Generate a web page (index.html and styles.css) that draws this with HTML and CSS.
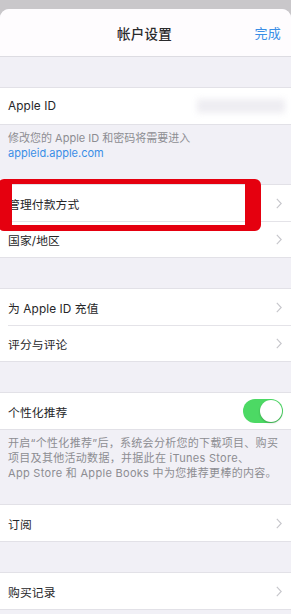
FILE: index.html
```html
<!DOCTYPE html>
<html lang="zh-CN">
<head>
<meta charset="utf-8">
<link rel="stylesheet" href="styles.css">
</head>
<body>
<div class="sheet">
  <header class="nav">
    <span></span>
    <h1 class="title">帐户设置</h1>
    <a class="done">完成</a>
  </header>

  <section class="group first">
    <div class="row"><span class="label">Apple ID</span><span class="blurred"></span></div>
  </section>
  <p class="footer short">修改您的 Apple ID 和密码将需要进入<br><span class="link">appleid.apple.com</span></p>

  <section class="group">
    <div class="row"><span class="label">管理付款方式</span><svg class="chev" viewBox="0 0 6 11"><polyline points="0.8,0.8 5.2,5.5 0.8,10.2"/></svg></div>
    <div class="row"><span class="label">国家/地区</span><svg class="chev" viewBox="0 0 6 11"><polyline points="0.8,0.8 5.2,5.5 0.8,10.2"/></svg></div>
  </section>

  <section class="group spaced">
    <div class="row"><span class="label">为 Apple ID 充值</span><svg class="chev" viewBox="0 0 6 11"><polyline points="0.8,0.8 5.2,5.5 0.8,10.2"/></svg></div>
    <div class="row"><span class="label">评分与评论</span><svg class="chev" viewBox="0 0 6 11"><polyline points="0.8,0.8 5.2,5.5 0.8,10.2"/></svg></div>
  </section>

  <section class="group spaced">
    <div class="row"><span class="label">个性化推荐</span><span class="toggle"><span class="knob"></span></span></div>
  </section>
  <p class="footer long">开启“个性化推荐”后，系统会分析您的下载项目、购买<br>项目及其他活动数据，并据此在 iTunes Store、<br>App Store 和 Apple Books 中为您推荐更棒的内容。</p>

  <section class="group">
    <div class="row"><span class="label">订阅</span><svg class="chev" viewBox="0 0 6 11"><polyline points="0.8,0.8 5.2,5.5 0.8,10.2"/></svg></div>
  </section>

  <section class="group spaced">
    <div class="row"><span class="label">购买记录</span><svg class="chev" viewBox="0 0 6 11"><polyline points="0.8,0.8 5.2,5.5 0.8,10.2"/></svg></div>
  </section>
</div>
<div class="highlight"></div>
</body>
</html>
```

FILE: styles.css
```css
* { box-sizing: border-box; }
html, body { margin: 0; padding: 0; }
body {
  background: #c9c7ca;
  font-family: Inter, "Noto Sans CJK SC", sans-serif;
  color: #262628;
  width: 291px;
  height: 614px;
  overflow: hidden;
  position: relative;
}
.sheet {
  margin-top: 9px;
  background: #f1f0f6;
  border-radius: 9px 9px 0 0;
  overflow: hidden;
  height: 605px;
}
.nav {
  height: 48px;
  background: #fefcfe;
  border-bottom: 1px solid #dddce2;
  display: grid;
  grid-template-columns: 1fr auto 1fr;
  align-items: center;
  padding: 0 10px 0 8px;
}
.title {
  margin: 0;
  font-size: 13.5px;
  font-weight: 500;
  color: #2a2a2c;
  letter-spacing: 0.3px;
}
.done {
  justify-self: end;
  font-size: 13px;
  color: #3a8ee6;
  letter-spacing: 0.2px;
}
.group {
  background: #fff;
  border-top: 1px solid #e2e1e7;
  border-bottom: 1px solid #e2e1e7;
}
.group.first { margin-top: 30px; }
.group.spaced { margin-top: 30px; }
.row {
  height: 36px;
  display: flex;
  align-items: center;
  padding: 0 9px 0 8px;
  position: relative;
}
.row + .row { border-top: 1px solid #e4e3e8; margin-left: 8px; padding-left: 0; }
.label {
  font-size: 11.8px;
  letter-spacing: 0.1px;
  flex: 1;
}
.chev {
  width: 6px;
  height: 11px;
  fill: none;
  stroke: #c6c6cb;
  stroke-width: 1.1;
}
.blurred {
  width: 88px;
  height: 14px;
  background: #eeedf2;
  filter: blur(3px);
  margin-right: -3px;
}
.footer {
  margin: 0;
  color: #8d8d92;
  font-size: 11px;
  line-height: 14.5px;
  padding: 6px 8px 0 8px;
  white-space: nowrap;
}
.footer.short { height: 59px; }
.footer.long { height: 74px; padding-top: 6px; line-height: 15px; letter-spacing: 0.3px; }
.link { color: #3a8ee6; }
.toggle {
  width: 40px;
  height: 24px;
  border-radius: 12px;
  background: #4cd964;
  display: flex;
  justify-content: flex-end;
  align-items: center;
  padding: 1px;
  margin-right: -1px;
}
.knob {
  width: 22px;
  height: 22px;
  border-radius: 50%;
  background: #fff;
  box-shadow: 0 1px 2px rgba(0,0,0,0.25);
}
.highlight {
  position: absolute;
  left: -2px;
  top: 179px;
  width: 263px;
  height: 52px;
  border-style: solid;
  border-color: #e5000f;
  border-width: 5px 16px 6px 14px;
  border-radius: 6px;
}
```
